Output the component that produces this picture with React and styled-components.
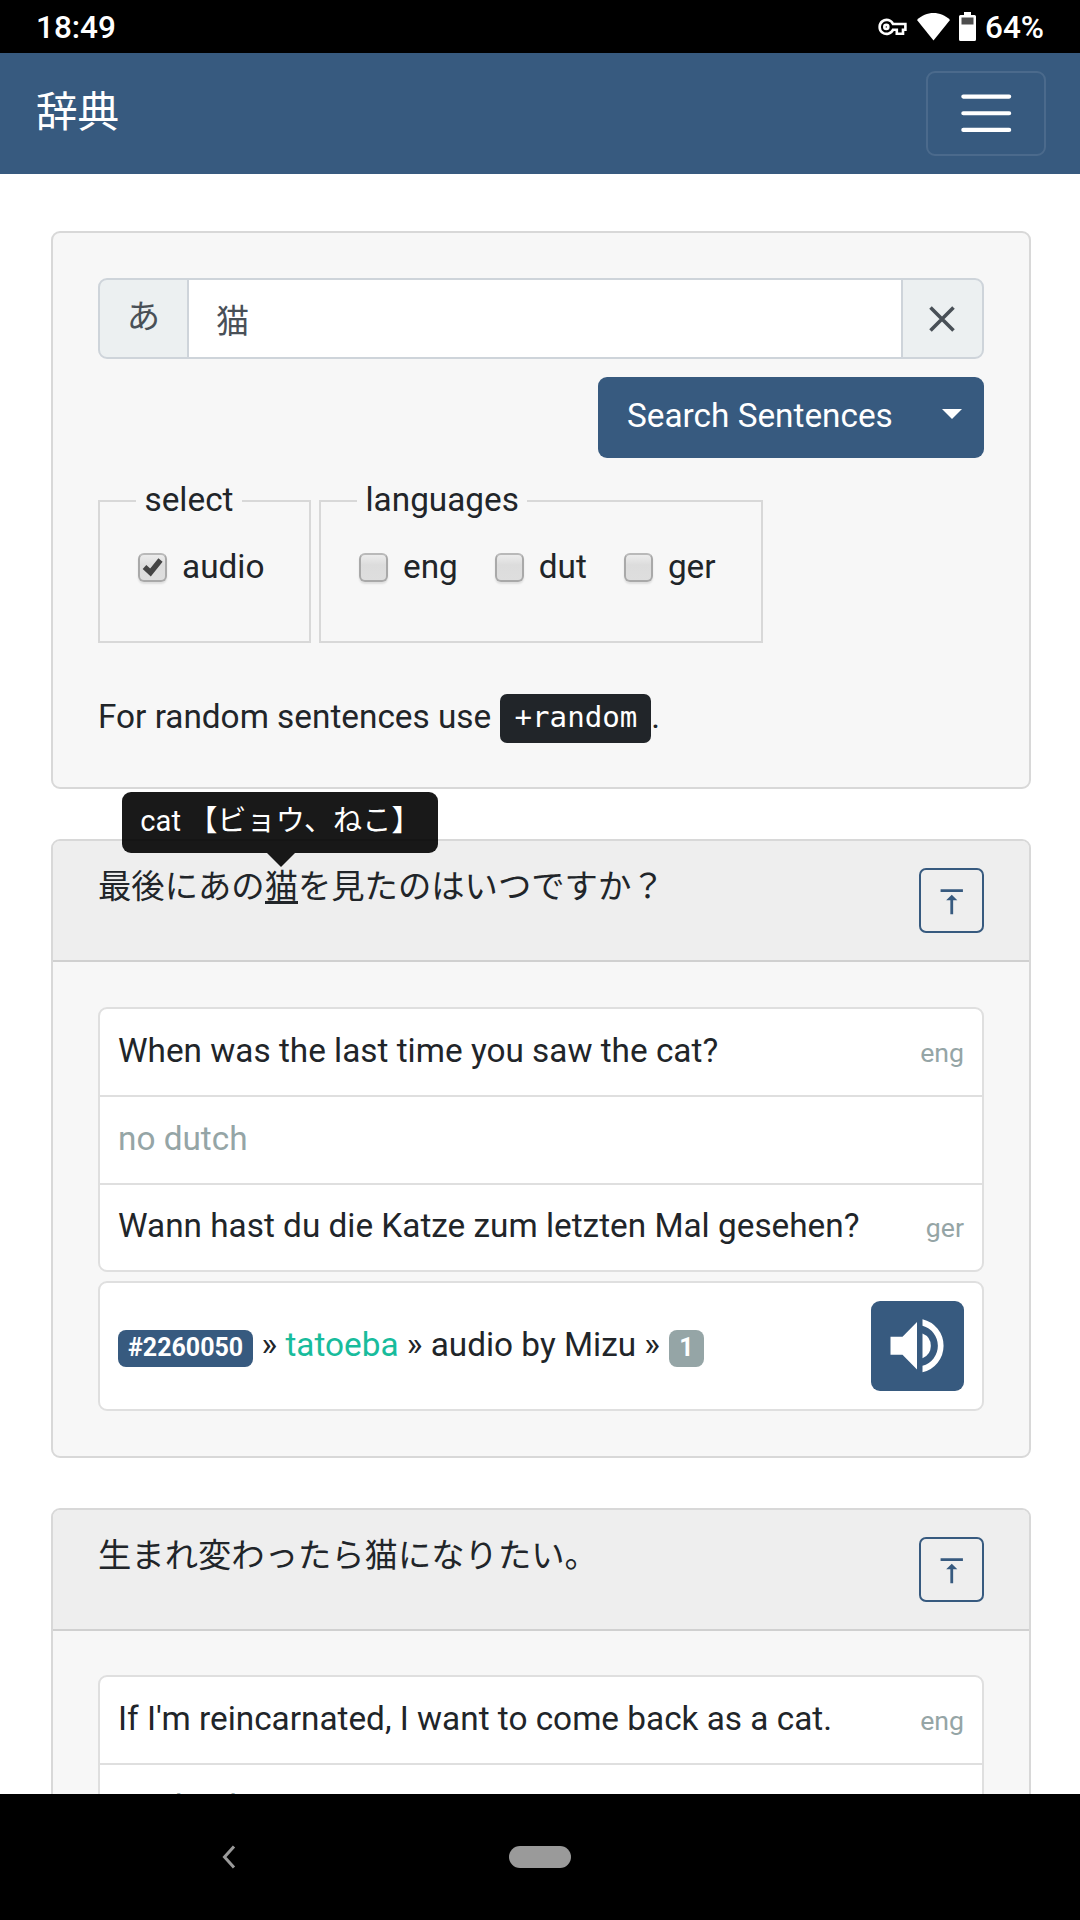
import React from 'react';
import styled, { createGlobalStyle } from 'styled-components';

const NAVY = '#375a7f';
const SANS = "Roboto, 'Noto Sans CJK JP', sans-serif";

const GlobalStyle = createGlobalStyle`
  *, *::before, *::after { box-sizing: border-box; }
  html, body { margin: 0; height: 100%; overflow: hidden; background: #fff; }
  body { font-family: ${SANS}; font-size: 33.333px; line-height: 50px; color: #212529; }
  button, input { font: inherit; }
`;

const Screen = styled.div`
  width: 1080px;
  height: 1920px;
  display: flex;
  flex-direction: column;
  overflow: hidden;
`;

const StatusBar = styled.div`
  flex: none;
  height: 53px;
  padding: 0 36px;
  background: #000;
  color: #fff;
  display: flex;
  align-items: center;
  justify-content: space-between;
  font-size: 31.5px;
  font-weight: 500;
  line-height: 51px;
`;

const StatusIcons = styled.div`
  display: flex;
  align-items: center;
  height: 53px;
  svg { display: block; }
`;

const Clock = styled.span`
  padding-top: 2px;
`;

const Percent = styled.span`
  margin-left: 9px;
  padding-top: 2px;
`;

const Navbar = styled.nav`
  flex: none;
  height: 121px;
  padding: 0 34px 0 36px;
  background: ${NAVY};
  display: flex;
  align-items: center;
  justify-content: space-between;
`;

const Brand = styled.span`
  color: #fff;
  font-size: 41.6px;
  line-height: 62px;
  padding-bottom: 2px;
`;

const Toggler = styled.button`
  width: 120px;
  height: 85px;
  padding: 0;
  border: 2px solid rgba(255, 255, 255, 0.1);
  border-radius: 9px;
  background: transparent;
  display: flex;
  align-items: center;
  justify-content: center;
`;

const Page = styled.main`
  flex: 1;
  min-height: 0;
  overflow: hidden;
  padding: 57px 49px 0 51px;
  display: flex;
  flex-direction: column;
`;

const Card = styled.section`
  flex: none;
  border: 2px solid #d8d8d8;
  border-radius: 9px;
  background: #f7f7f7;
  height: ${(p) => p.$height}px;
  margin-bottom: ${(p) => p.$gap}px;
`;

const CardBody = styled.div`
  padding: ${(p) => p.$top || 45}px 45px 45px;
  display: flex;
  flex-direction: column;
`;

const InputGroup = styled.div`
  height: 81px;
  display: flex;
  border: 2px solid #ced4da;
  border-radius: 9px;
  background: #ecf0f1;
  color: #495057;
  overflow: hidden;
`;

const Prepend = styled.span`
  width: 89px;
  border-right: 2px solid #ced4da;
  display: flex;
  justify-content: center;
  align-items: center;
  padding-bottom: 4px;
`;

const Field = styled.input`
  flex: 1;
  min-width: 0;
  border: 0;
  outline: 0;
  background: #fff;
  color: #495057;
  padding: 6px 27px 0;
`;

const Clear = styled.button`
  width: 81px;
  padding: 0 1px 0 0;
  border: 0;
  border-left: 2px solid #ced4da;
  background: transparent;
  display: flex;
  align-items: center;
  justify-content: center;
`;

const SearchButton = styled.button`
  align-self: flex-end;
  width: 386px;
  height: 81px;
  margin-top: 18px;
  padding: 0 22px 3px 29px;
  border: 0;
  border-radius: 9px;
  background: ${NAVY};
  color: #fff;
  display: flex;
  align-items: center;
  justify-content: space-between;
`;

const Caret = styled.span`
  border: 10px solid transparent;
  border-top-color: #fff;
  border-bottom: 0;
  margin-bottom: 4px;
`;

const Filters = styled.div`
  display: flex;
  gap: 8px;
  margin-top: 26px;
`;

const Fieldset = styled.fieldset`
  margin: 0;
  min-width: 0;
  width: ${(p) => p.$width}px;
  height: 159px;
  border: 2px solid #d8d8d8;
  padding: 24px 0 0 38px;
`;

const Legend = styled.legend`
  margin-left: -2px;
  padding: 0 8.5px;
  height: 34px;
  line-height: 32px;
`;

const Options = styled.div`
  display: flex;
`;

const Option = styled.label`
  display: flex;
  align-items: center;
  gap: 15px;
  margin-right: 37px;
`;

const Box = styled.span`
  width: 29px;
  height: 29px;
  border: 2px solid #a9a9a9;
  border-top-color: #b9b9b9;
  border-radius: 6px;
  background: linear-gradient(#ececec, #dcdcdc 40%, #dedede);
  box-shadow: 0 2px 2px rgba(0, 0, 0, 0.1);
  display: flex;
  align-items: center;
  justify-content: center;
`;

const Hint = styled.p`
  margin: 49px 0 0;
  height: 50px;
  white-space: nowrap;
`;

const Kbd = styled.kbd`
  display: inline-block;
  height: 49px;
  line-height: 46px;
  margin-left: 1px;
  padding: 0 14px;
  border-radius: 7px;
  background: #212529;
  color: #fff;
  font-family: 'DejaVu Sans Mono', monospace;
  font-size: 29.17px;
  vertical-align: 1px;
`;

const CardHeader = styled.header`
  height: 121px;
  padding: 21px 45px 0;
  border-bottom: 2px solid #d0d0d0;
  border-radius: 7px 7px 0 0;
  background: #eeeeee;
  display: flex;
  justify-content: space-between;
`;

const Sentence = styled.span`
  white-space: nowrap;
`;

const Word = styled.span`
  position: relative;
  display: inline-block;
  height: 42px;
  border-bottom: 3px solid #212529;
`;

const Tooltip = styled.span`
  position: absolute;
  left: 50%;
  bottom: 48px;
  margin-left: -159px;
  width: 316px;
  height: 61px;
  padding-left: 18px;
  border-radius: 9px;
  background: rgba(0, 0, 0, 0.9);
  color: #fff;
  font-size: 29.17px;
  line-height: 58px;
  white-space: nowrap;
  &::after {
    content: '';
    position: absolute;
    top: 100%;
    left: 50%;
    margin-left: -13px;
    border: 14px solid transparent;
    border-top-color: rgba(0, 0, 0, 0.9);
    border-bottom: 0;
  }
`;

const TopButton = styled.button`
  width: 65px;
  height: 65px;
  margin-top: 6px;
  padding: 2px 0 0;
  border: 2px solid ${NAVY};
  border-radius: 7px;
  background: transparent;
  display: flex;
  align-items: center;
  justify-content: center;
`;

const List = styled.div`
  border: 2px solid #dfdfdf;
  border-radius: 9px;
  background: #fff;
  overflow: hidden;
`;

const Row = styled.div`
  height: ${(p) => (p.$last ? 85 : 88)}px;
  padding: ${(p) => (p.$last ? 16 : 17)}px 18px 0;
  border-bottom: ${(p) => (p.$last ? 0 : 2)}px solid #dfdfdf;
  color: ${(p) => (p.$muted ? '#95a5a6' : 'inherit')};
  display: flex;
  align-items: baseline;
  justify-content: space-between;
  white-space: nowrap;
`;

const Lang = styled.small`
  font-size: 26.667px;
  color: #95a5a6;
`;

const Meta = styled.div`
  height: 130px;
  margin-top: 9px;
  padding: 0 18px;
  border: 2px solid #dfdfdf;
  border-radius: 9px;
  background: #fff;
  display: flex;
  align-items: center;
  justify-content: space-between;
  white-space: nowrap;
`;

const Source = styled.span`
  padding-bottom: 2px;
`;

const Badge = styled.span`
  display: inline-block;
  height: 37px;
  line-height: 36px;
  padding: 0 10px;
  border-radius: 8px;
  background: ${(p) => p.$color};
  color: #fff;
  font-size: 25px;
  font-weight: 700;
`;

const CountBadge = styled(Badge)`
  margin-left: 1px;
`;

const Link = styled.a`
  color: #18bc9c;
`;

const PlayButton = styled.button`
  width: 93px;
  height: 90px;
  padding: 0 1px 0 0;
  border: 0;
  border-radius: 9px;
  background: ${NAVY};
  display: flex;
  align-items: center;
  justify-content: center;
`;

const SystemNav = styled.div`
  flex: none;
  height: 126px;
  background: #000;
  display: grid;
  grid-template-columns: 222px 287px 62px;
  align-items: center;
  svg { display: block; grid-column: 2; }
`;

const HomePill = styled.span`
  width: 62px;
  height: 22px;
  border-radius: 11px;
  background: #9a9a9a;
`;

const KeyIcon = () => (
  <svg width="29" height="18" viewBox="0 0 29 18" fill="none" stroke="#fff" strokeWidth="2.6">
    <path d="M15 6A7 7 0 1 0 15 11.800H18.800V15.800H25V11.800H27.400V6Z" />
    <circle cx="8.300" cy="8.900" r="2" />
  </svg>
);

const WifiIcon = styled(({ className }) => (
  <svg className={className} width="33" height="28" viewBox="0 0 33 28">
    <path d="M0 7C9-2.200 24-2.200 33 7L16.500 27.500Z" fill="#fff" />
  </svg>
))`
  margin-left: 10px;
`;

const BatteryIcon = styled(({ className }) => (
  <svg className={className} width="17" height="29" viewBox="0 0 17 29">
    <path d="M5 0h7v3h3.500A1.500 1.500 0 0 1 17 4.500V27.500A1.500 1.500 0 0 1 15.500 29H1.500A1.500 1.500 0 0 1 0 27.500V4.500A1.500 1.500 0 0 1 1.500 3H5Z" fill="#fff" />
    <path d="M2.500 5.500h12v7h-12z" fill="#4d4d4d" />
  </svg>
))`
  margin-left: 9px;
`;

const AlignTopIcon = () => (
  <svg width="33.500" height="33.500" viewBox="0 0 24 24" fill={NAVY}>
    <path d="M8 11h3v10h2V11h3l-4-4-4 4zM4 3v2h16V3H4z" />
  </svg>
);

const SpeakerIcon = () => (
  <svg width="54" height="54" viewBox="0 0 54 54" fill="#fff">
    <path d="M0.500 17.700H12.500L27 3V50.500L12.500 35.800H0.500Z" />
    <path d="M32.500 0.300A27.200 27.200 0 0 1 32.500 53.300V46.800A20.700 20.700 0 0 0 32.500 6.800Z" />
    <path d="M32.500 14.400A13.400 13.400 0 0 1 32.500 39.200Z" />
  </svg>
);

const Check = () => (
  <svg width="22" height="20" viewBox="0 0 22 20" fill="none" stroke="#444" strokeWidth="5.400">
    <path d="M2.500 10L8.500 15.500L18.500 3" />
  </svg>
);

function Checkbox({ label, checked }) {
  return (
    <Option>
      <Box>{checked && <Check />}</Box>
      {label}
    </Option>
  );
}

function Result({ sentence, height, gap, bodyTop, translations, children }) {
  return (
    <Card $height={height} $gap={gap}>
      <CardHeader>
        <Sentence>{sentence}</Sentence>
        <TopButton aria-label="top"><AlignTopIcon /></TopButton>
      </CardHeader>
      <CardBody $top={bodyTop}>
        <List>
          {translations.map((t, i) => (
            <Row key={i} $muted={!t.lang} $last={i === 2}>
              <span>{t.text}</span>
              {t.lang && <Lang>{t.lang}</Lang>}
            </Row>
          ))}
        </List>
        {children}
      </CardBody>
    </Card>
  );
}

export default function App() {
  return (
    <Screen>
      <GlobalStyle />
      <StatusBar>
        <Clock>18:49</Clock>
        <StatusIcons>
          <KeyIcon />
          <WifiIcon />
          <BatteryIcon />
          <Percent>64%</Percent>
        </StatusIcons>
      </StatusBar>
      <Navbar>
        <Brand>辞典</Brand>
        <Toggler aria-label="menu">
          <svg width="62.500" height="62.500" viewBox="0 0 30 30" stroke="#fff" strokeWidth="2" strokeLinecap="round">
            <path d="M4 7h22M4 15h22M4 23h22" />
          </svg>
        </Toggler>
      </Navbar>
      <Page>
        <Card $height={558} $gap={50}>
          <CardBody>
            <InputGroup>
              <Prepend>あ</Prepend>
              <Field defaultValue="猫" />
              <Clear aria-label="clear">
                <svg width="26" height="26" viewBox="0 0 26 26" stroke="#495057" strokeWidth="3.600">
                  <path d="M1.500 1.500L24.500 24.500M24.500 1.500L1.500 24.500" />
                </svg>
              </Clear>
            </InputGroup>
            <SearchButton>
              Search Sentences
              <Caret />
            </SearchButton>
            <Filters>
              <Fieldset $width={213}>
                <Legend>select</Legend>
                <Options>
                  <Checkbox label="audio" checked />
                </Options>
              </Fieldset>
              <Fieldset $width={444}>
                <Legend>languages</Legend>
                <Options>
                  <Checkbox label="eng" />
                  <Checkbox label="dut" />
                  <Checkbox label="ger" />
                </Options>
              </Fieldset>
            </Filters>
            <Hint>
              For random sentences use <Kbd>+random</Kbd>.
            </Hint>
          </CardBody>
        </Card>
        <Result
          height={619}
          gap={50}
          sentence={
            <>
              最後にあの
              <Word>
                猫<Tooltip>cat 【ビョウ、ねこ】</Tooltip>
              </Word>
              を見たのはいつですか？
            </>
          }
          translations={[
            { text: 'When was the last time you saw the cat?', lang: 'eng' },
            { text: 'no dutch' },
            { text: 'Wann hast du die Katze zum letzten Mal gesehen?', lang: 'ger' },
          ]}
        >
          <Meta>
            <Source>
              <Badge $color={NAVY}>#2260050</Badge> » <Link>tatoeba</Link> » audio by Mizu »{' '}
              <CountBadge $color="#95a5a6">1</CountBadge>
            </Source>
            <PlayButton aria-label="play"><SpeakerIcon /></PlayButton>
          </Meta>
        </Result>
        <Result
          height={619}
          gap={0}
          bodyTop={44}
          sentence="生まれ変わったら猫になりたい。"
          translations={[
            { text: "If I'm reincarnated, I want to come back as a cat.", lang: 'eng' },
            { text: 'no dutch' },
          ]}
        />
      </Page>
      <SystemNav>
        <svg width="14" height="24" viewBox="0 0 14 24" fill="none" stroke="#9a9a9a" strokeWidth="3">
          <path d="M12 1.500L2.500 12L12 22.500" />
        </svg>
        <HomePill />
      </SystemNav>
    </Screen>
  );
}
